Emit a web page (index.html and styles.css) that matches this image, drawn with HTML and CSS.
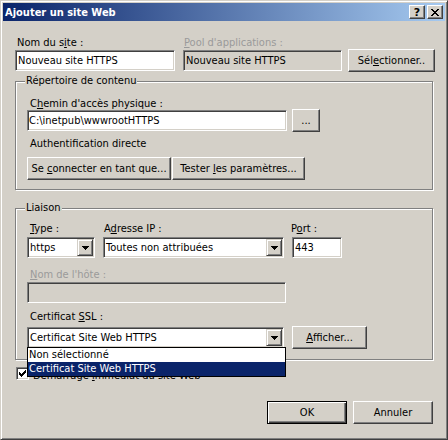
FILE: index.html
```html
<!DOCTYPE html>
<html lang="fr">
<head>
<meta charset="utf-8">
<title>Ajouter un site Web</title>
<link rel="stylesheet" href="styles.css">
</head>
<body>
<div class="window">
  <div class="titlebar">
    <span class="title">Ajouter un site Web</span>
    <div class="tbtns">
      <span class="tbtn help">?</span>
      <span class="tbtn"><svg width="8" height="7" viewBox="0 0 8 7"><path d="M0 0h2v1H0zM6 0h2v1H6zM1 1h2v1H1zM5 1h2v1H5zM2 2h4v1H2zM3 3h2v1H3zM2 4h4v1H2zM1 5h2v1H1zM5 5h2v1H5zM0 6h2v1H0zM6 6h2v1H6z" fill="#000"/></svg></span>
    </div>
  </div>

  <div class="content">
    <div class="row-top">
      <div class="field">
        <div class="lbl lm2">Nom du s<u>i</u>te :</div>
        <div class="edit">Nouveau site HTTPS</div>
      </div>
      <div class="field">
        <div class="lbl lm1 dis"><u>P</u>ool d'applications :</div>
        <div class="edit ro">Nouveau site HTTPS</div>
      </div>
      <button class="btn btn-sel"><span>Sél<u>e</u>ctionner..</span></button>
    </div>

    <div class="group g1">
      <span class="legend">Répertoire de contenu</span>
      <div class="lbl lm3 lbl-path">C<u>h</u>emin d'accès physique :</div>
      <div class="path-row">
        <div class="edit path">C:\inetpub\wwwrootHTTPS</div>
        <button class="btn btn-dots"><span>...</span></button>
      </div>
      <div class="lbl lm3 auth">Authentification directe</div>
      <div class="btn-pair">
        <button class="btn btn-conn"><span>Se <u>c</u>onnecter en tant que...</span></button>
        <button class="btn btn-test"><span>Tester <u>l</u>es paramètres...</span></button>
      </div>
    </div>

    <div class="group g2">
      <span class="legend">Liaison</span>
      <div class="bind-grid">
        <div class="field">
          <div class="lbl lm3"><u>T</u>ype :</div>
          <div class="select">
            <span class="val">https</span>
            <span class="arrow"><svg width="7" height="4" viewBox="0 0 7 4"><path d="M0 0h7v1H0zM1 1h5v1H1zM2 2h3v1H2zM3 3h1v1H3z" fill="#000"/></svg></span>
          </div>
        </div>
        <div class="field">
          <div class="lbl lm1">A<u>d</u>resse IP :</div>
          <div class="select">
            <span class="val">Toutes non attribuées</span>
            <span class="arrow"><svg width="7" height="4" viewBox="0 0 7 4"><path d="M0 0h7v1H0zM1 1h5v1H1zM2 2h3v1H2zM3 3h1v1H3z" fill="#000"/></svg></span>
          </div>
        </div>
        <div class="field">
          <div class="lbl lmn1">P<u>o</u>rt :</div>
          <div class="edit">443</div>
        </div>
      </div>
      <div class="lbl lm3 dis host-lbl"><u>N</u>om de l'hôte :</div>
      <div class="edit ro host-edit"></div>
      <div class="lbl lm3 cert-lbl">Certificat <u>S</u>SL :</div>
      <div class="cert-row">
        <div class="select cert-sel">
          <span class="val">Certificat Site Web HTTPS</span>
          <span class="arrow"><svg width="7" height="4" viewBox="0 0 7 4"><path d="M0 0h7v1H0zM1 1h5v1H1zM2 2h3v1H2zM3 3h1v1H3z" fill="#000"/></svg></span>
        </div>
        <button class="btn btn-aff"><span><u>A</u>fficher...</span></button>
        <div class="dropdown">
          <div class="opt">Non sélectionné</div>
          <div class="opt selected">Certificat Site Web HTTPS</div>
        </div>
      </div>
    </div>

    <div class="check-row">
      <span class="checkbox"><svg width="7" height="7" viewBox="0 0 7 7"><path d="M6 0h1v1H6zM5 1h2v1H5zM0 2h1v1H0zM4 2h3v1H4zM0 3h2v1H0zM3 3h3v1H3zM0 4h5v1H0zM1 5h3v1H1zM2 6h1v1H2z" fill="#000"/></svg></span>
      <span class="check-lbl">Démarrage <u>i</u>mmédiat du site Web</span>
    </div>

    <div class="footer">
      <button class="btn btn-foot default"><span>OK</span></button>
      <button class="btn btn-foot"><span>Annuler</span></button>
    </div>
  </div>
</div>
</body>
</html>
```

FILE: styles.css
```css
* { box-sizing: border-box; }
html, body { margin: 0; padding: 0; }
body {
  width: 448px;
  height: 440px;
  background: #d4d0c8;
  font-family: "DejaVu Sans Condensed", "Liberation Sans", sans-serif;
  font-size: 11px;
  line-height: 13px;
  color: #000;
}
u { text-decoration: underline; text-underline-offset: 1px; }

.window {
  width: 448px;
  height: 440px;
  border: 1px solid;
  border-color: #d4d0c8 #404040 #404040 #d4d0c8;
  box-shadow: inset 1px 1px #fff, inset -1px -1px #808080;
  padding: 2px;
  background: #d4d0c8;
}

.titlebar {
  height: 18px;
  background: linear-gradient(to right, #0a246a, #a6caf0);
  display: flex;
  align-items: center;
  justify-content: space-between;
  padding: 0 2px;
}
.title { color: #fff; font-weight: bold; }
.tbtns { display: flex; gap: 2px; }
.tbtn {
  width: 16px;
  height: 14px;
  background: #d4d0c8;
  border: 1px solid;
  border-color: #fff #404040 #404040 #fff;
  box-shadow: inset -1px -1px #808080;
  display: flex;
  align-items: center;
  justify-content: center;
}
.tbtn.help { font-weight: bold; font-size: 11px; line-height: 11px; font-family: "DejaVu Sans", sans-serif; }

.content { padding: 15px 12px 0 12px; }

.lbl { height: 13px; white-space: nowrap; }
.lm1 { margin-left: 1px; }
.lm2 { margin-left: 2px; }
.lm3 { margin-left: 3px; }
.lmn1 { margin-left: -1px; }
.dis { color: #9a9a9a; }

.edit, .select {
  height: 21px;
  background: #fff;
  border: 1px solid;
  border-color: #808080 #fff #fff #808080;
  box-shadow: inset 1px 1px #404040, inset -1px -1px #d4d0c8;
  display: flex;
  align-items: center;
  white-space: nowrap;
  overflow: hidden;
}
.edit { padding: 0 2px; }
.edit.ro { background: #d4d0c8; }
.select { padding: 1px; }
.select .val { padding-left: 1px; flex: 1; }
.arrow {
  width: 16px;
  height: 17px;
  flex: none;
  background: #d4d0c8;
  border: 1px solid;
  border-color: #d4d0c8 #404040 #404040 #d4d0c8;
  box-shadow: inset 1px 1px #fff, inset -1px -1px #808080;
  display: flex;
  align-items: center;
  justify-content: center;
}

.btn {
  font: inherit;
  color: #000;
  height: 23px;
  padding: 0;
  background: #d4d0c8;
  border: 1px solid;
  border-color: #fff #404040 #404040 #fff;
  box-shadow: inset -1px -1px #808080;
  display: flex;
  align-items: center;
  justify-content: center;
  white-space: nowrap;
}

/* top row */
.row-top {
  display: grid;
  grid-template-columns: 160px 159px 85px;
  column-gap: 8px;
  align-items: end;
}
.row-top .field .lbl { margin-bottom: 1px; }
.btn-sel { margin-left: -2px; margin-bottom: -1px; }

/* group boxes */
.group {
  position: relative;
  border: 1px solid #808080;
  box-shadow: inset 1px 1px #fff, 1px 1px #fff;
  padding-left: 11px;
  padding-right: 11px;
}
.legend {
  position: absolute;
  top: -8px;
  left: 9px;
  padding: 0 1px;
  background: #d4d0c8;
  line-height: 13px;
}
.g1 { margin-top: 10px; padding-top: 15px; padding-bottom: 9px; }
.lbl-path { margin-bottom: -1px; }
.path-row { display: flex; align-items: center; gap: 5px; }
.edit.path { width: 260px; padding-left: 1px; }
.btn-dots { width: 28px; }
.auth { margin-top: 5px; }
.btn-pair { display: flex; gap: 1px; margin-top: 7px; }
.btn-conn { width: 144px; }
.btn-test { width: 133px; }

.g2 { margin-top: 18px; padding-top: 13px; padding-bottom: 10px; }
.bind-grid {
  display: grid;
  grid-template-columns: 68px 181px 50px;
  column-gap: 8px;
}
.bind-grid .lbl { margin-bottom: 2px; }
.host-lbl { margin-top: 10px; margin-bottom: 1px; }
.host-edit { width: 259px; }
.cert-lbl { margin-top: 7px; margin-bottom: 3px; }
.cert-row { position: relative; display: flex; align-items: center; gap: 8px; }
.cert-sel { width: 257px; }
.btn-aff { width: 75px; }
.dropdown {
  position: absolute;
  top: 21px;
  left: 0;
  width: 259px;
  border: 1px solid #000;
  background: #fff;
  z-index: 2;
}
.opt { height: 14px; line-height: 14px; padding-left: 1px; white-space: nowrap; }
.opt.selected { background: #0a246a; color: #fff; }

.check-row {
  margin-top: 7px;
  height: 13px;
  display: flex;
  align-items: flex-start;
  gap: 4px;
  padding-left: 1px;
}
.checkbox {
  width: 13px;
  height: 13px;
  flex: none;
  background: #fff;
  border: 1px solid;
  border-color: #808080 #fff #fff #808080;
  box-shadow: inset 1px 1px #404040, inset -1px -1px #d4d0c8;
  display: flex;
  align-items: center;
  justify-content: center;
}
.check-lbl { margin-top: 2px; }

.footer {
  margin-top: 21px;
  display: flex;
  justify-content: flex-end;
  gap: 6px;
}
.btn-foot { width: 80px; }
.btn.default {
  border: 1px solid #000;
  box-shadow: inset 1px 1px #fff, inset -1px -1px #404040, inset -2px -2px #808080;
}
```
